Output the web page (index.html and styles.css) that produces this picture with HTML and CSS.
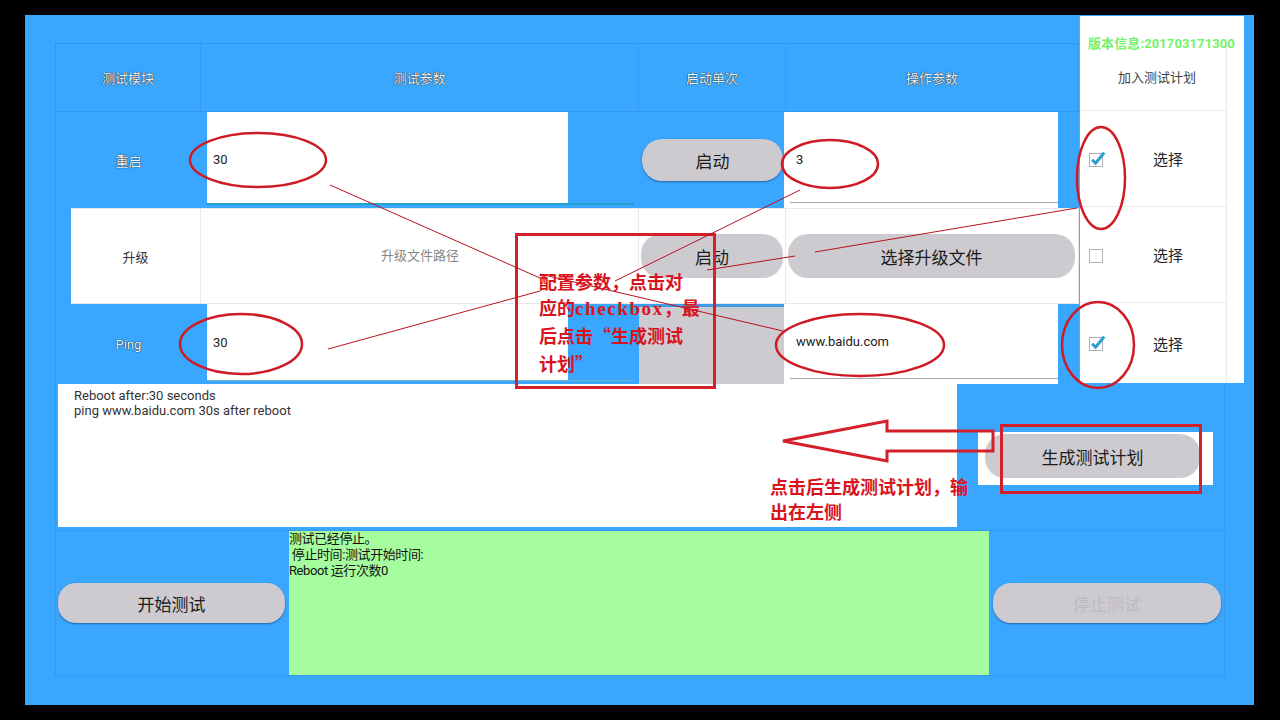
FILE: index.html
```html
<!DOCTYPE html>
<html lang="zh-CN">
<head>
<meta charset="utf-8">
<title>测试计划</title>
<link rel="stylesheet" href="styles.css">
</head>
<body>
<div class="screen">
  <div class="panel">
    <div class="top">
      <div class="table">
        <div class="cell head">测试模块</div>
        <div class="cell head">测试参数</div>
        <div class="cell head">启动单次</div>
        <div class="cell head">操作参数</div>

        <div class="cell mod">重启</div>
        <div class="cell param p1">
          <div class="fill"><span class="val">30</span></div>
          <div class="uline teal"></div>
        </div>
        <div class="cell once"><button class="btn b-once">启动</button></div>
        <div class="cell op">
          <div class="fill"><span class="val v3">3</span><div class="uline gray"></div></div>
        </div>

        <div class="cell mod light">升级</div>
        <div class="cell param light hint">升级文件路径</div>
        <div class="cell once light"><button class="btn b-once">启动</button></div>
        <div class="cell op light"><button class="btn b-file">选择升级文件</button></div>

        <div class="cell mod">Ping</div>
        <div class="cell param p3">
          <div class="fill"><span class="val">30</span></div>
          <div class="uline thin"></div>
        </div>
        <div class="cell once pressed"></div>
        <div class="cell op">
          <div class="fill"><span class="val">www.baidu.com</span><div class="uline gray"></div></div>
        </div>
      </div>

      <div class="plan">
        <div class="version">版本信息:201703171300</div>
        <div class="plan-rows">
          <div class="prow phead">加入测试计划</div>
          <div class="prow r96">
            <svg class="cb" width="20" height="20" viewBox="0 0 20 20"><rect x="1.5" y="4.5" width="13" height="13" fill="#fff" stroke="#a9aeb4"/><path d="M4.2 10.8 L7.6 14.2 L16.2 3.6" fill="none" stroke="#2c9fcf" stroke-width="3"/></svg>
            <span class="pick">选择</span>
          </div>
          <div class="prow r96">
            <svg class="cb" width="20" height="20" viewBox="0 0 20 20"><rect x="1.5" y="4.5" width="13" height="13" fill="#fff" stroke="#a9aeb4"/></svg>
            <span class="pick">选择</span>
          </div>
          <div class="prow r80">
            <svg class="cb" width="20" height="20" viewBox="0 0 20 20"><rect x="1.5" y="4.5" width="13" height="13" fill="#fff" stroke="#a9aeb4"/><path d="M4.2 10.8 L7.6 14.2 L16.2 3.6" fill="none" stroke="#2c9fcf" stroke-width="3"/></svg>
            <span class="pick">选择</span>
          </div>
        </div>
      </div>
    </div>

    <div class="mid">
      <div class="output">Reboot after:30 seconds<br>ping www.baidu.com 30s after reboot</div>
      <div class="gen-area">
        <div class="gen-wrap"><button class="btn b-gen">生成测试计划</button></div>
      </div>
    </div>

    <div class="bottom">
      <button class="btn b-run">开始测试</button>
      <div class="status">测试已经停止。<br>&nbsp;停止时间:测试开始时间:<br>Reboot 运行次数0</div>
      <button class="btn b-run disabled">停止测试</button>
    </div>
  </div>
</div>

<svg class="annot" width="1280" height="720" viewBox="0 0 1280 720">
  <g fill="none" stroke="#cf1b24" stroke-width="2.5">
    <ellipse cx="258" cy="160" rx="68" ry="27"/>
    <ellipse cx="830" cy="164" rx="48" ry="24"/>
    <ellipse cx="1101" cy="178" rx="24" ry="51"/>
    <ellipse cx="241" cy="344" rx="61" ry="30"/>
    <ellipse cx="860" cy="345" rx="84" ry="31"/>
    <ellipse cx="1098" cy="345" rx="36" ry="43"/>
  </g>
  <g fill="none" stroke="#d4202a" stroke-width="3">
    <rect x="516.5" y="234.5" width="198" height="153"/>
    <rect x="1001.5" y="425.5" width="199" height="67"/>
    <polygon points="783,441 887,421 887,431 993,431 993,451 887,451 887,461"/>
  </g>
  <g stroke="#b8121c" stroke-width="1">
    <line x1="330" y1="185" x2="540" y2="278"/>
    <line x1="540" y1="274" x2="783" y2="331"/>
    <line x1="328" y1="349" x2="540" y2="291"/>
    <line x1="615" y1="281" x2="800" y2="190"/>
    <line x1="707" y1="270" x2="795" y2="256"/>
    <line x1="815" y1="252" x2="1077" y2="208"/>
  </g>
</svg>

<div class="note note1">配置参数，点击对<br>应的<span class="lat">checkbox</span>，最<br>后点击<span class="cjk">“</span>生成测试<br>计划<span class="cjk">”</span></div>
<div class="note note2">点击后生成测试计划，输<br>出在左侧</div>
</body>
</html>
```

FILE: styles.css
```css
html, body {
  margin: 0;
  padding: 0;
  background: #000;
}
body {
  width: 1280px;
  height: 720px;
  overflow: hidden;
  position: relative;
  font-family: Roboto, "Noto Sans CJK SC", sans-serif;
  color: #222;
}
.screen {
  padding: 15px 26px 15px 25px;
}
.panel {
  width: 1229px;
  height: 690px;
  background: #39a7fd;
  position: relative;
}

/* ---------- top table ---------- */
.top {
  display: flex;
  height: 368px;
}
.table {
  margin: 28px 0 0 30px;
  display: grid;
  grid-template-columns: 145px 438px 147px 293px;
  grid-template-rows: 68px 96px 96px 80px;
  border-top: 1px solid rgba(20, 90, 160, 0.18);
  border-left: 1px solid rgba(20, 90, 160, 0.18);
  box-sizing: border-box;
}
.cell {
  box-sizing: border-box;
  font-size: 13px;
}
.head {
  display: flex;
  align-items: center;
  justify-content: center;
  color: #f4f4f4;
  text-shadow: 0 0 1px rgba(0,0,0,.9), 0 0 1px rgba(0,0,0,.7);
  border-bottom: 1px solid rgba(20, 90, 160, 0.18);
  border-right: 1px solid rgba(20, 90, 160, 0.14);
}
.mod {
  display: flex;
  align-items: center;
  justify-content: center;
  color: #f4f4f4;
  text-shadow: 0 0 1px rgba(0,0,0,.9), 0 0 1px rgba(0,0,0,.7);
  font-size: 13px;
}
.light {
  background: #fff;
  border-top: 1px solid #ebe6ef;
  border-bottom: 1px solid #ebe6ef;
  border-right: 1px solid #efe4f4;
}
.mod.light {
  margin-left: 15px;
  color: #333;
  text-shadow: none;
}
.hint {
  display: flex;
  align-items: center;
  justify-content: center;
  color: #888;
}
.param {
  display: flex;
  flex-direction: column;
  padding: 0 5px 3px 6px;
}
.param .fill {
  width: 361px;
  flex: 1;
  background: #fff;
  display: flex;
  align-items: center;
}
.p1 .fill {
  padding-top: 3px;
}
.val {
  font-size: 13px;
  color: #222;
  padding-left: 6px;
}
.op .val {
  padding-left: 12px;
  flex: 1;
  display: flex;
  align-items: center;
}
.op .val.v3 {
  padding-top: 4px;
}
.uline.teal {
  height: 2px;
  background: #21a2c8;
  margin-left: -1px;
}
.uline.thin {
  height: 1px;
  background: #6fb6cc;
}
.once {
  display: flex;
  align-items: center;
}
.once.pressed {
  background: #cdcbd0;
  border-top: 3px solid #3f9be6;
}
.op {
  padding-right: 21px;
  display: flex;
}
.op.light {
  padding-right: 3px;
  align-items: center;
}
.op .fill {
  flex: 1;
  background: #fff;
  display: flex;
  flex-direction: column;
  margin-left: -2px;
}
.uline.gray {
  height: 1px;
  background: #a8a8a8;
  margin: 0 0 5px 6px;
}

/* ---------- buttons ---------- */
.btn {
  border: none;
  background: #cdcbd0;
  border-radius: 20px;
  font-family: Roboto, "Noto Sans CJK SC", sans-serif;
  font-size: 17px;
  color: #1c1c1c;
  box-shadow: 0 1px 2px rgba(0, 20, 80, 0.45);
  padding: 0;
}
.b-once {
  width: 141px;
  height: 42px;
  margin-left: 3px;
}
.light .b-once {
  width: 142px;
  height: 44px;
  margin-left: 2px;
  box-shadow: none;
}
.b-file {
  width: 288px;
  height: 44px;
  margin-left: 2px;
  box-shadow: none;
}
.b-gen {
  width: 215px;
  height: 44px;
  box-shadow: none;
}
.b-run {
  height: 40px;
  border-radius: 18px;
}
.b-run.disabled {
  color: #bcbac0;
}

/* ---------- plan column ---------- */
.plan {
  margin-top: 1px;
  width: 165px;
  height: 367px;
  background: #fff;
  position: relative;
  border-left: 1px solid #5aaaf0;
  box-sizing: border-box;
  padding-top: 27px;
}
.version {
  position: absolute;
  top: 17px;
  left: 8px;
  font-size: 13px;
  font-weight: bold;
  color: #74f26a;
  white-space: nowrap;
  letter-spacing: 0.1px;
}
.plan-rows {
  width: 146px;
  border-right: 1px solid #ece6f3;
}
.prow {
  display: flex;
  align-items: center;
  box-sizing: border-box;
  border-bottom: 1px solid #efe8f0;
}
.phead {
  height: 68px;
  justify-content: center;
  font-size: 13px;
  color: #444;
  padding-left: 8px;
}
.r96 { height: 96px; }
.r80 { height: 80px; border-bottom: none; }
.cb {
  margin-left: 8px;
  flex: none;
}
.pick {
  margin-left: 45px;
  font-size: 15px;
  color: #222;
}

/* ---------- mid ---------- */
.mid {
  display: flex;
  height: 144px;
  margin-left: 30px;
  width: 1166px;
  padding-left: 2px;
  border-left: 1px solid rgba(20, 90, 160, 0.18);
  border-right: 1px solid rgba(20, 90, 160, 0.14);
}
.output {
  width: 899px;
  height: 143px;
  margin-top: 1px;
  background: #fff;
  box-sizing: border-box;
  padding: 4px 16px;
  font-size: 13px;
  line-height: 15px;
  color: #333;
}
.gen-area {
  flex: 1;
  padding: 49px 0 0 21px;
}
.gen-wrap {
  width: 235px;
  height: 53px;
  background: #fff;
  box-sizing: border-box;
  padding: 2px 13px 7px 7px;
}

/* ---------- bottom ---------- */
.bottom {
  display: grid;
  grid-template-columns: 227px 700px 228px;
  column-gap: 4px;
  align-items: center;
  margin-left: 30px;
  width: 1166px;
  padding-left: 2px;
  margin-top: 3px;
  height: 144px;
  border-top: 1px solid rgba(20, 90, 160, 0.14);
  border-left: 1px solid rgba(20, 90, 160, 0.18);
  border-right: 1px solid rgba(20, 90, 160, 0.14);
  border-bottom: 1px solid rgba(20, 90, 160, 0.14);
}
.status {
  height: 144px;
  background: #a6fd9e;
  font-size: 13px;
  line-height: 16px;
  color: #111;
  letter-spacing: -0.4px;
}

/* ---------- annotations ---------- */
.annot {
  position: absolute;
  left: 0;
  top: 0;
  pointer-events: none;
}
.note {
  position: absolute;
  font-family: "Liberation Serif", "Noto Sans CJK SC", serif;
  font-weight: bold;
  font-size: 18px;
  color: #d8141e;
  white-space: nowrap;
}
.note .cjk {
  font-family: "Noto Sans CJK SC", sans-serif;
}
.note .lat {
  font-size: 19px;
  letter-spacing: 1.6px;
}
.note1 {
  left: 539px;
  top: 270px;
  line-height: 26px;
}
.note2 {
  left: 770px;
  top: 476px;
  line-height: 25px;
}
```
